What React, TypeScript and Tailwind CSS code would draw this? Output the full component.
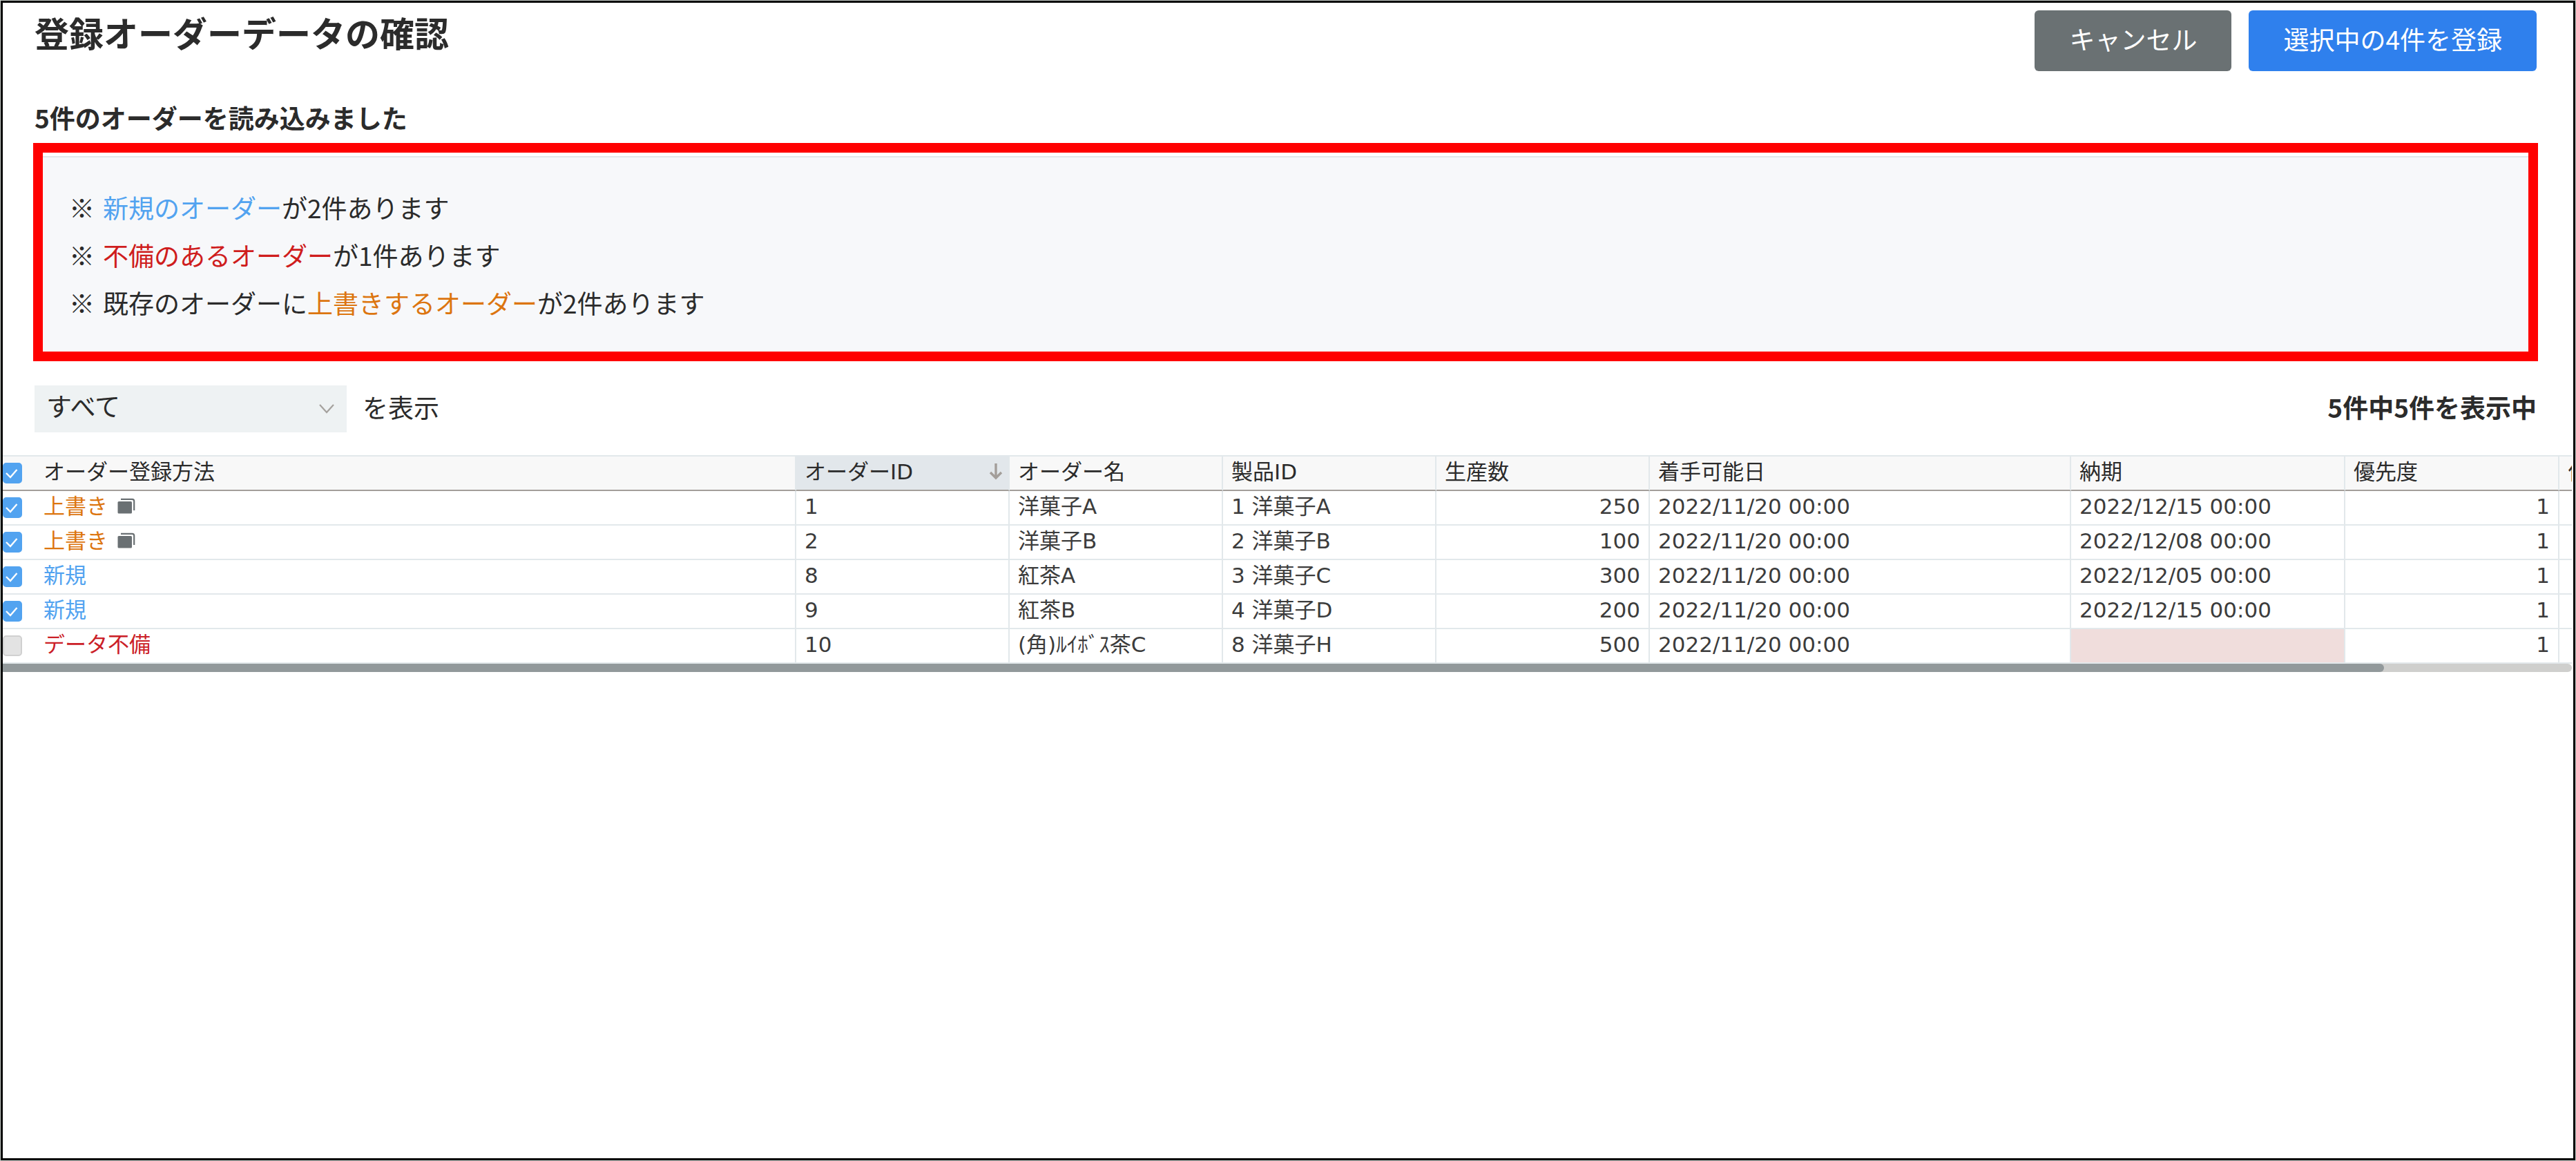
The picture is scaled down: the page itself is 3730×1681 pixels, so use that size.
import React, { useState } from 'react';
import clsx from 'clsx';

type Status = 'overwrite' | 'new' | 'invalid';

interface Order {
  id: number;
  status: Status;
  name: string;
  product: string;
  quantity: number;
  startDate: string;
  dueDate: string;
  priority: number;
}

const statuses = {
  overwrite: { label: '上書き', className: 'text-[#dc750f]' },
  new: { label: '新規', className: 'text-[#52a3f0]' },
  invalid: { label: 'データ不備', className: 'text-[#cb2027]' },
};

const orders: Order[] = [
  { id: 1, status: 'overwrite', name: '洋菓子A', product: '1 洋菓子A', quantity: 250, startDate: '2022/11/20 00:00', dueDate: '2022/12/15 00:00', priority: 1 },
  { id: 2, status: 'overwrite', name: '洋菓子B', product: '2 洋菓子B', quantity: 100, startDate: '2022/11/20 00:00', dueDate: '2022/12/08 00:00', priority: 1 },
  { id: 8, status: 'new', name: '紅茶A', product: '3 洋菓子C', quantity: 300, startDate: '2022/11/20 00:00', dueDate: '2022/12/05 00:00', priority: 1 },
  { id: 9, status: 'new', name: '紅茶B', product: '4 洋菓子D', quantity: 200, startDate: '2022/11/20 00:00', dueDate: '2022/12/15 00:00', priority: 1 },
  { id: 10, status: 'invalid', name: '(角)ﾙｲﾎﾞｽ茶C', product: '8 洋菓子H', quantity: 500, startDate: '2022/11/20 00:00', dueDate: '', priority: 1 },
];

const selectableIds = orders.filter((o) => o.status !== 'invalid').map((o) => o.id);

interface CheckboxProps {
  label: string;
  checked: boolean;
  disabled?: boolean;
  onChange: () => void;
}

function Checkbox({ label, checked, disabled, onChange }: CheckboxProps) {
  return (
    <span className="grid h-[30px] w-7">
      <input
        type="checkbox"
        aria-label={label}
        checked={checked}
        disabled={disabled}
        onChange={onChange}
        className="col-start-1 row-start-1 h-[30px] w-7 appearance-none rounded-[5px] border-2 border-[#d0d0d0] bg-white checked:border-[#52a3f0] checked:bg-[#52a3f0] disabled:bg-[#e3e3e3]"
      />
      {checked && (
        <svg viewBox="0 0 28 30" className="pointer-events-none col-start-1 row-start-1 h-[30px] w-7" fill="none">
          <path d="M5 15 L11 21 L20.5 10" stroke="#fff" strokeWidth="2.4" />
        </svg>
      )}
    </span>
  );
}

function CopyIcon() {
  return (
    <svg viewBox="0 0 26 24" className="h-6 w-[26px]" fill="none">
      <rect x="0.5" y="5" width="20.5" height="17.5" rx="1.5" fill="#6a7073" />
      <path d="M5 1.8 H21.5 Q24.2 1.8 24.2 4.6 V18" stroke="#6a7073" strokeWidth="2.2" />
    </svg>
  );
}

function HeaderCell({ children }: { children: React.ReactNode }) {
  return (
    <th className="border-y-2 border-r-2 border-t-[#e2e8eb] border-r-[#e2e8eb] border-b-[#a39e9a] bg-[#f8f8f8] px-3 pb-1 text-left font-normal">
      {children}
    </th>
  );
}

function Cell({ children, className }: { children?: React.ReactNode; className?: string }) {
  return (
    <td className={clsx('border-r-2 border-b-2 border-[#e2e8eb] px-3 pb-1', className)}>{children}</td>
  );
}

export default function App() {
  const [selected, setSelected] = useState<number[]>(selectableIds);
  const [filter, setFilter] = useState('all');

  const visible = orders.filter((o) => filter === 'all' || o.status === filter);
  const allSelected = selected.length === selectableIds.length;

  const toggle = (id: number) => {
    setSelected((prev) => (prev.includes(id) ? prev.filter((x) => x !== id) : [...prev, id]));
  };

  return (
    <div className="min-h-screen border border-[#c9cfcb] bg-white font-['Noto_Sans_CJK_JP',sans-serif] text-[37px] text-[#2b2b2b] flex flex-col">
      <div className="flex-1 border-[3px] border-black">
        <div className="pt-[11px] pr-[53px] pl-[46px]">
          {/* Title bar */}
          <header className="flex items-start justify-between">
            <h1 className="text-[50px] leading-[62px] font-bold">登録オーダーデータの確認</h1>
            <div className="flex gap-[25px] text-white">
              <button type="button" className="h-[88px] rounded-[6px] bg-[#6a7173] px-[50px] pb-1">
                キャンセル
              </button>
              <button type="button" className="h-[88px] rounded-[6px] bg-[#2f80ed] px-[50px] pb-1">
                選択中の{selected.length}件を登録
              </button>
            </div>
          </header>

          <h2 className="mt-[42px] mb-3 leading-[50px] font-bold">{orders.length}件のオーダーを読み込みました</h2>

          {/* Import summary */}
          <section className="-mx-[2px] border-[14px] border-[#ff0000] pt-[5px]">
            <ul className="border-t-2 border-[#e2e6ea] bg-[#f7f8fa] px-[38px] pt-[38px] pb-9 leading-[69px]">
              <li className="flex">
                <span className="w-[49px]">※</span>
                <span className="text-[#52a3f0]">新規のオーダー</span>が2件あります
              </li>
              <li className="flex">
                <span className="w-[49px]">※</span>
                <span className="text-[#cf1d1d]">不備のあるオーダー</span>が1件あります
              </li>
              <li className="flex">
                <span className="w-[49px]">※</span>
                既存のオーダーに<span className="text-[#dc750f]">上書きするオーダー</span>が2件あります
              </li>
            </ul>
          </section>

          {/* Filter */}
          <div className="mt-[35px] mb-[33px] flex items-center justify-between">
            <div className="flex items-center gap-[23px]">
              <div className="grid items-center">
                <select
                  id="filter"
                  value={filter}
                  onChange={(e) => setFilter(e.target.value)}
                  className="col-start-1 row-start-1 h-[68px] w-[452px] appearance-none bg-[#eef2f3] pr-16 pb-2 pl-[17px]"
                >
                  <option value="all">すべて</option>
                  <option value="overwrite">上書き</option>
                  <option value="new">新規</option>
                  <option value="invalid">データ不備</option>
                </select>
                <svg
                  viewBox="0 0 22 14"
                  className="pointer-events-none col-start-1 row-start-1 mr-[18px] h-[14px] w-[22px] justify-self-end"
                  fill="none"
                >
                  <path d="M1 1 L11 12 L21 1" stroke="#a5a29e" strokeWidth="2.2" />
                </svg>
              </div>
              <label htmlFor="filter" className="pb-1">
                を表示
              </label>
            </div>
            <p className="pb-1 font-bold">
              {orders.length}件中{visible.length}件を表示中
            </p>
          </div>
        </div>

        {/* Order table */}
        <div className="mr-[2px] overflow-hidden">
          <table className="w-[4012px] table-fixed border-separate border-spacing-0 font-['DejaVu_Sans','Noto_Sans_CJK_JP',sans-serif] text-[31px] leading-[44px] whitespace-nowrap">
            <colgroup>
              <col className="w-[47px]" />
              <col className="w-[1102px]" />
              <col className="w-[309px]" />
              <col className="w-[309px]" />
              <col className="w-[309px]" />
              <col className="w-[309px]" />
              <col className="w-[610px]" />
              <col className="w-[397px]" />
              <col className="w-[310px]" />
              <col className="w-[310px]" />
            </colgroup>
            <thead>
              <tr className="h-[52px]">
                <th className="border-y-2 border-t-[#e2e8eb] border-b-[#a39e9a] bg-[#f8f8f8]">
                  <Checkbox
                    label="すべて選択"
                    checked={allSelected}
                    onChange={() => setSelected(allSelected ? [] : selectableIds)}
                  />
                </th>
                <HeaderCell>オーダー登録方法</HeaderCell>
                <th
                  aria-sort="ascending"
                  className="border-y-2 border-r-2 border-t-[#e2e8eb] border-r-[#e2e8eb] border-b-[#a39e9a] bg-[#e2e7eb] pr-2 pb-1 pl-3 text-left font-normal"
                >
                  <div className="flex items-center justify-between">
                    オーダーID
                    <svg viewBox="0 0 20 24" className="h-6 w-5" fill="none" stroke="#a39e9a" strokeWidth="3.4">
                      <path d="M10 0 V21 M2 13 L10 21 L18 13" />
                    </svg>
                  </div>
                </th>
                <HeaderCell>オーダー名</HeaderCell>
                <HeaderCell>製品ID</HeaderCell>
                <HeaderCell>生産数</HeaderCell>
                <HeaderCell>着手可能日</HeaderCell>
                <HeaderCell>納期</HeaderCell>
                <HeaderCell>優先度</HeaderCell>
                <HeaderCell>作業</HeaderCell>
              </tr>
            </thead>
            <tbody className="text-[#3c3c3c]">
              {visible.map((order) => (
                <tr key={order.id} className="h-[50px]">
                  <td className="border-b-2 border-[#e2e8eb]">
                    <Checkbox
                      label={order.name}
                      checked={selected.includes(order.id)}
                      disabled={order.status === 'invalid'}
                      onChange={() => toggle(order.id)}
                    />
                  </td>
                  <Cell className={statuses[order.status].className}>
                    <div className="flex items-center gap-[14px]">
                      {statuses[order.status].label}
                      {order.status === 'overwrite' && (
                        <button type="button" aria-label="上書き内容を表示">
                          <CopyIcon />
                        </button>
                      )}
                    </div>
                  </Cell>
                  <Cell>{order.id}</Cell>
                  <Cell>{order.name}</Cell>
                  <Cell>{order.product}</Cell>
                  <Cell className="text-right">{order.quantity}</Cell>
                  <Cell>{order.startDate}</Cell>
                  <Cell className={clsx(!order.dueDate && 'bg-[#f0dddc]')}>{order.dueDate}</Cell>
                  <Cell className="text-right">{order.priority}</Cell>
                  <Cell />
                </tr>
              ))}
            </tbody>
          </table>
          <div className="h-3 rounded-r-full bg-[#cfcfcd]">
            <div className="h-3 w-[92.7%] rounded-r-full bg-[#92999b]" />
          </div>
        </div>
      </div>
    </div>
  );
}
